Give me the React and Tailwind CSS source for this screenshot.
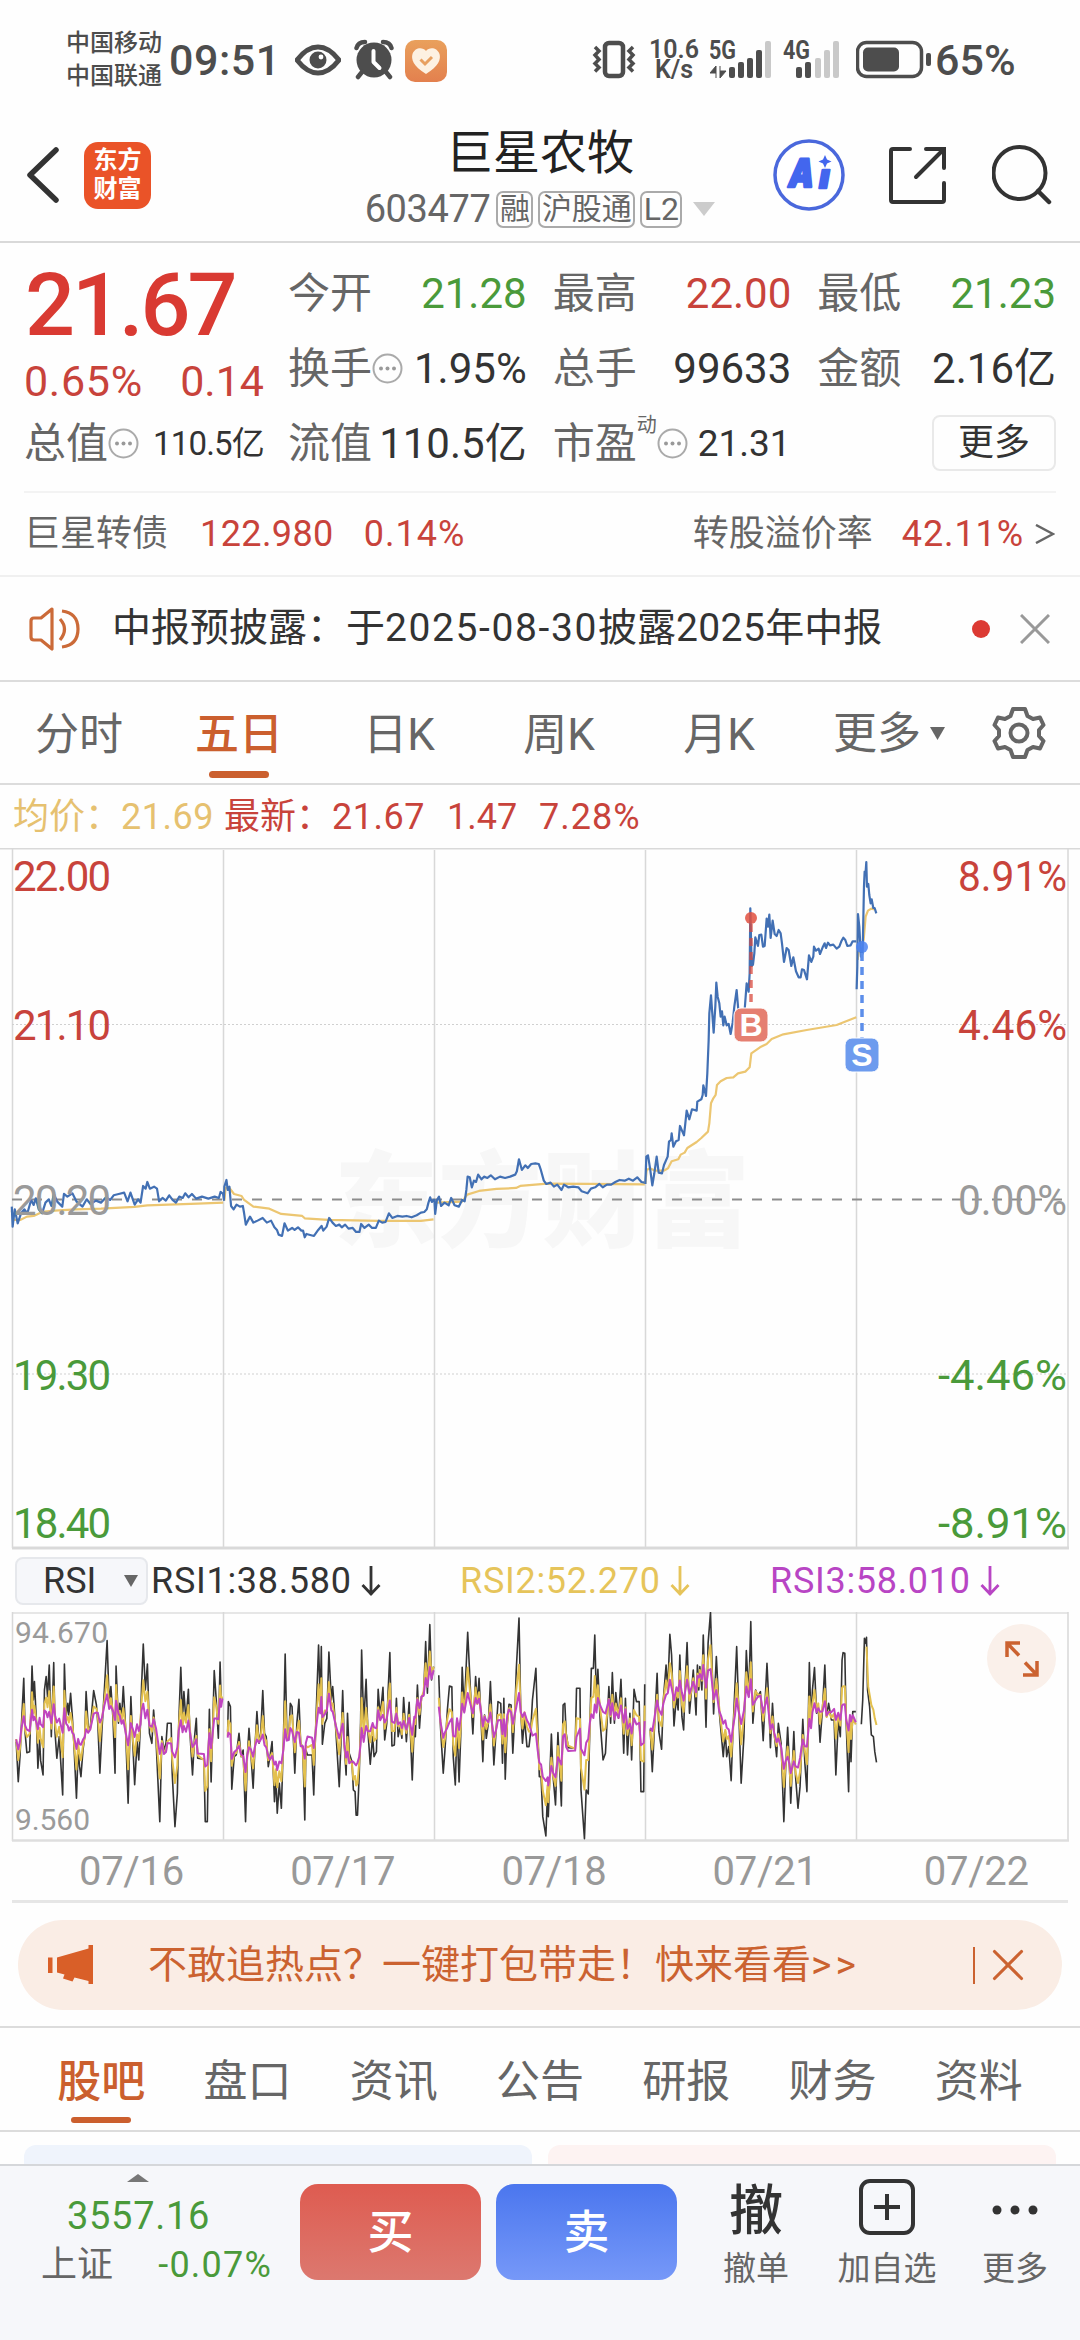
import { LuX } from 'react-icons/lu'

const stats = [
  [
    { label: '今开', value: '21.28', color: 'text-[#4a9a3a]' },
    { label: '最高', value: '22.00', color: 'text-[#c8433b]' },
    { label: '最低', value: '21.23', color: 'text-[#4a9a3a]' },
  ],
  [
    { label: '换手', value: '1.95%', color: 'text-[#333]', info: true },
    { label: '总手', value: '99633', color: 'text-[#333]' },
    { label: '金额', value: '2.16亿', color: 'text-[#333]' },
  ],
]

const periods = ['分时', '五日', '日K', '周K', '月K']
const dates = ['07/16', '07/17', '07/18', '07/21', '07/22']
const sections = ['股吧', '盘口', '资讯', '公告', '研报', '财务', '资料']

const axis = [
  { price: '22.00', pct: '8.91%', y: 28, width: 109, color: '#c8433b' },
  { price: '21.10', pct: '4.46%', y: 177, width: 109, color: '#c8433b' },
  { price: '20.20', pct: '0.00%', y: 352, width: 109, color: '#9a9a9a' },
  { price: '19.30', pct: '-4.46%', y: 527, width: 129, color: '#4a9a3a' },
  { price: '18.40', pct: '-8.91%', y: 675, width: 129, color: '#4a9a3a' },
]

// first three trading days
const priceA = [
  '28,1100 30,1160 35,1108 42,1150 50,1120 58,1108 65,1120 74,1080 80,1095 85,1075 92,1108 100,1120 108,1088 116,1078 122,1098 128,1062 136,1085 148,1100 152,1062 160,1070 172,1060 182,1085 196,1100 206,1078 215,1092 228,1082 240,1088 252,1072 262,1080 270,1066 282,1062 295,1058 303,1084 310,1058 320,1094 328,1078 334,1088 340,1038 346,1046 350,1026 356,1046 366,1040 373,1046 378,1084 386,1074 394,1082 402,1066 410,1080 418,1088 426,1070 434,1074 440,1060 448,1072 456,1062 466,1076 480,1070 495,1076 510,1070 520,1074 524,1056 530,1062 532,1080 533,1040 538,1020 541,1050 545,1040 549,1098 555,1108 562,1094 570,1100 577,1098 580,1120 584,1154 594,1130 602,1148 612,1142 624,1134 634,1148 644,1142 652,1162 658,1170 662,1184 670,1188 676,1150 684,1172 694,1164 700,1170 708,1162 716,1172 720,1172 724,1192 728,1182 746,1188 756,1170 764,1158 768,1172 776,1160 782,1134 790,1148 798,1158 806,1154 812,1162 820,1154 828,1166 838,1164 846,1176 854,1176 858,1152 866,1164 876,1154 884,1164 893,1164 900,1142 908,1148 916,1146 924,1120 932,1134 944,1128 956,1130 966,1128 978,1132 990,1126 1000,1118 1008,1116 1014,1108 1018,1088 1022,1072 1026,1086 1030,1080 1032,1080 1034,1122 1038,1080 1043,1070 1048,1098 1056,1088 1066,1096 1072,1074 1080,1096 1090,1100 1098,1080 1104,1084 1108,1050 1111,1010 1116,1012 1121,1042 1126,1022 1131,1026 1136,1004 1144,1018 1150,1010 1158,1014 1166,1006 1176,1018 1188,1010 1200,1014 1212,1010 1224,1004 1228,994 1233,958 1240,990 1248,976 1254,984 1262,972 1272,970 1280,972 1285,990 1292,1022 1298,1032 1308,1028 1316,1040 1324,1034 1334,1050 1340,1034 1350,1042 1362,1040 1374,1042 1382,1054 1396,1060 1404,1046 1414,1042 1424,1032 1432,1042 1442,1034 1452,1034 1462,1026 1472,1020 1484,1022 1494,1016 1504,1022 1514,1012 1524,1026 1532,1028',
]
const avgA = [
  '28,1112 32,1140 48,1140 64,1130 80,1128 100,1116 130,1112 180,1108 240,1106 320,1101 350,1096 400,1094 470,1091 530,1088',
  '533,1082 536,1044 545,1044 556,1062 574,1068 580,1080 602,1100 640,1106 668,1122 718,1128 724,1135 780,1140 900,1143 1000,1143 1030,1138',
  '1036,1088 1098,1085 1110,1064 1138,1053 1180,1047 1226,1044 1236,1038 1300,1031 1400,1032 1532,1033',
]
// last two trading days
const priceB = [
  '136,1032 139,950 144,946 150,984 157,1036 163,1000 170,950 176,998 186,1000 192,975 203,950 207,905 213,900 215,880 220,920 228,904 236,900 240,858 246,872 252,886 256,850 260,812 268,838 276,808 290,812 292,785 304,778 308,765 310,736 318,768 322,700 326,600 328,520 333,466 341,578 346,500 349,428 353,470 358,490 362,530 366,514 370,556 374,530 380,556 386,552 392,582 398,548 403,500 410,450 415,510 422,570 428,520 434,510 440,430 446,455 449,400 451,205 455,378 459,374 463,340 466,292 474,318 478,285 484,284 489,320 494,318 500,236 504,260 508,224 512,294 518,242 524,282 530,288 536,270 542,280 546,310 552,366 560,324 566,330 574,378 580,352 588,394 596,412 602,412 606,388 612,390 621,418 627,346 634,366 640,350 642,320 648,332 656,326 660,342 668,322 674,310 678,324 684,308 690,316 700,314 710,326 718,320 724,304 730,293 736,300 742,318 752,316 758,304 769,304',
  '770,448 772,380 774,222 778,260 783,350 788,340 792,140 794,95 797,95 799,66 801,140 805,132 808,165 812,190 815,178 820,204 824,204 829,220',
]
const avgB = [
  '136,1032 140,990 150,985 165,992 192,992 204,985 215,964 235,958 242,944 254,938 262,924 290,906 304,894 324,875 328,850 333,790 340,775 347,765 351,735 362,724 380,714 400,712 414,700 436,695 449,682 454,640 480,622 500,612 515,597 550,583 620,570 710,555 769,532',
  '773,360 778,320 785,310 791,300 797,230 804,212 814,206 824,208',
]

const rsi = [
  '47,455 53,575 58,500 62,410 69,265 73,430 78,488 86,485 90,350 93,228 97,330 100,275 106,400 110,535 115,450 118,512 125,555 129,300 134,260 138,320 143,225 149,440 156,218 160,430 165,505 172,440 182,615 187,222 192,380 197,340 200,375 205,310 210,380 214,450 222,625 227,480 231,530 235,560 241,480 246,440 250,305 256,410 262,415 272,302 280,345 284,400 290,550 296,420 303,300 311,152 317,340 322,290 328,385 334,550 337,228 344,400 348,340 353,385 358,290 364,400 372,640 380,320 386,470 391,584 398,455 403,510 408,400 411,290 416,162 422,300 428,222 434,430 441,460 446,360 453,450 464,695 470,440 476,480 482,460 486,400 497,400 500,550 508,710 515,610 519,400 525,232 530,385 534,305 540,395 547,298 551,420 559,555 565,440 570,385 574,505 592,508 596,695 602,695 605,500 608,358 613,576 618,400 622,242 628,330 634,445 639,216 642,325 646,325',
  '661,425 663,335 669,350 673,598 680,500 686,495 694,430 700,500 706,480 713,695 718,500 723,415 729,500 735,595 740,480 746,365 752,460 757,430 763,302 768,430 773,440 779,530 784,500 790,455 797,635 801,560 805,670 811,580 817,655 823,450 828,192 833,430 838,450 843,340 848,350 856,550 862,400 868,328 873,460 879,470 885,690 888,480 893,495 906,495 911,615 917,400 925,165 930,340 933,170 936,463 943,400 949,385 955,186 962,330 966,290 975,420 985,590 990,460 995,302 1000,470 1005,555 1009,370 1014,490 1022,515 1026,600 1031,605 1034,676 1038,676 1043,555 1047,400 1050,180 1056,400 1063,268 1068,420 1075,523 1082,440 1086,500 1093,485 1098,298 1104,380 1112,292 1117,450 1123,400 1128,280 1132,188 1138,468 1145,465 1151,325 1156,440 1162,410 1167,445 1172,323 1180,455 1188,337 1197,570 1203,400 1206,440 1212,285 1218,415 1224,320 1230,315 1236,155 1241,310 1248,104 1253,270 1259,230',
  '1274,256 1279,410 1287,550 1292,480 1299,360 1305,288 1312,290 1316,500 1322,585 1327,405 1333,576 1338,430 1342,232 1348,360 1358,127 1366,300 1373,432 1381,260 1386,340 1391,265 1396,370 1402,515 1407,375 1412,445 1418,400 1424,275 1434,525 1440,430 1446,335 1454,340 1459,520 1463,325 1467,568 1473,400 1478,343 1484,345 1489,490 1495,370 1499,240 1507,84 1512,360 1517,460 1523,385 1530,470 1536,470 1541,425 1546,330 1556,235 1561,400 1566,560 1571,560 1576,680 1585,738 1590,600 1592,680 1601,432 1606,560 1613,645 1620,428 1630,648 1635,345 1640,340 1644,430 1650,473 1670,475 1674,295 1684,295 1687,600 1697,746 1702,600 1708,612 1713,400 1717,235 1723,235 1727,135 1732,340 1736,238 1743,400 1751,510 1758,490 1768,290 1773,400 1778,248 1784,400 1788,308 1796,385 1803,268 1811,490 1816,325 1822,495 1829,370 1834,510 1841,298 1848,335 1856,335 1861,605 1869,605 1872,283',
  '1888,418 1894,545 1899,440 1908,250 1913,425 1921,478 1926,330 1934,225 1939,300 1945,133 1950,195 1957,408 1964,320 1969,360 1974,195 1980,380 1985,420 1990,270 1995,158 2002,370 2008,300 2013,240 2021,375 2025,225 2029,300 2032,230 2038,300 2042,135 2050,412 2056,160 2063,67 2068,240 2072,372 2080,200 2088,360 2094,430 2100,500 2106,425 2110,500 2116,470 2123,572 2128,430 2134,290 2139,170 2144,330 2152,580 2160,440 2167,182 2174,320 2180,95 2186,400 2194,300 2200,320 2208,305 2216,452 2227,220 2232,330 2237,473 2243,340 2248,430 2255,500 2260,400 2268,460 2276,695 2281,540 2287,412 2292,520 2296,640 2305,425 2310,560 2317,655 2323,590 2331,388 2337,520 2343,605 2350,218 2355,400 2359,300 2365,233 2371,370 2376,350 2381,457 2388,360 2395,225 2400,380 2406,340 2414,390 2422,390 2427,555 2434,390 2440,440 2445,210 2448,188 2453,190 2457,400 2464,605 2468,400 2471,515 2476,365 2485,365',
  '2501,403 2505,330 2510,145 2514,160 2516,142 2519,300 2525,350 2530,435 2536,440 2540,485 2545,517',
]

// pull each value towards the average of its neighbours
function damp(points, span, keep) {
  const list = points.split(' ').map((p) => p.split(',').map(Number))
  return list
    .map(([x, y], i) => {
      const near = list.slice(Math.max(0, i - span), i + span + 1)
      const mean = near.reduce((sum, p) => sum + p[1], 0) / near.length
      return `${x},${(mean + (y - mean) * keep).toFixed(1)}`
    })
    .join(' ')
}

const rsi2 = [
  ...rsi.slice(0, 4).map((day) => damp(day, 5, 0.5)),
  '2516,170 2521,290 2526,320 2530,345 2536,360 2540,385 2545,405',
]
const rsi3 = rsi.slice(0, 4).map((day) => damp(day, 6, 0.22))

function Lines({ data, color, width = 2.2 }) {
  return data.map((points, index) => (
    <polyline
      key={index}
      points={points}
      fill="none"
      stroke={color}
      strokeWidth={width}
      strokeLinejoin="round"
      vectorEffect="non-scaling-stroke"
    />
  ))
}

function Info() {
  return (
    <svg className="w-[31px] h-[31px] shrink-0" viewBox="0 0 31 31">
      <circle cx="15.5" cy="15.5" r="14" fill="none" stroke="#aaa" strokeWidth="2" />
      <circle cx="9" cy="15.5" r="2" fill="#999" />
      <circle cx="15.5" cy="15.5" r="2" fill="#999" />
      <circle cx="22" cy="15.5" r="2" fill="#999" />
    </svg>
  )
}

function StatusBar() {
  return (
    <div className="h-[122px] flex items-start pt-[26px] text-[#4d4d4d] font-medium">
      <div className="ml-[66px] w-[103px] pt-[1px] text-[24px] leading-[33px] whitespace-nowrap">
        <p>中国移动</p>
        <p>中国联通</p>
      </div>
      <p className="w-[126px] text-[43px] leading-[68px] tracking-[0.5px]">09:51</p>
      <svg className="w-[46px] h-[68px]" viewBox="0 0 46 68">
        <path d="M2 34 Q12 21 23 21 T44 34 Q34 47 23 47 T2 34 Z" fill="none" stroke="#4d4d4d" strokeWidth="5" strokeLinejoin="round" />
        <circle cx="23" cy="34" r="8.5" fill="#4d4d4d" />
        <circle cx="26" cy="31" r="2.4" fill="#fff" />
      </svg>
      <svg className="w-[40px] h-[68px] ml-[13px]" viewBox="0 0 40 68">
        <circle cx="20" cy="34" r="17.5" fill="#4d4d4d" />
        <path d="M2.500 22 Q4 16 11 16 M37.500 22 Q36 16 29 16 M8 46 l-4 5 M32 46 l4 5" fill="none" stroke="#4d4d4d" strokeWidth="4.500" strokeLinecap="round" />
        <path d="M19.500 25 v11 l6 6" fill="none" stroke="#fff" strokeWidth="4" strokeLinecap="round" strokeLinejoin="round" />
      </svg>
      <div className="w-[42px] h-[42px] mt-[14px] ml-[11px] rounded-[10px] bg-gradient-to-b from-[#e9a05c] to-[#e3804e] flex items-center justify-center">
        <svg className="w-[30px] h-[28px]" viewBox="0 0 30 28">
          <path d="M15 27 C2 19 0 12 1.500 7 C4 0 12 0 15 4 C18 0 26 0 28.500 7 C30 12 28 19 15 27 Z" fill="#fdf1e2" />
          <path d="M9.500 12.500 l4.500 4.500 7-7" fill="none" stroke="#e8a060" strokeWidth="3" />
        </svg>
      </div>
      <svg className="w-[44px] h-[68px] ml-[145px]" viewBox="0 0 44 68">
        <rect x="13" y="17" width="18" height="33" rx="4" fill="none" stroke="#4d4d4d" strokeWidth="4.500" />
        <path d="M3 21 l4 4 -4 4 4 4.500 -4 4 4 4 -4 4 M41 21 l-4 4 4 4 -4 4.500 4 4 -4 4 4 4" fill="none" stroke="#4d4d4d" strokeWidth="3.500" />
      </svg>
      <div className="w-[74px] pt-[14px] pl-[2px] text-[25px] leading-[20px] font-semibold text-center">
        <p>10.6</p>
        <p>K/s</p>
      </div>
      <svg className="w-[146px] h-[68px]" viewBox="710 26 146 68">
        <text x="709" y="59" fontSize="25" fontWeight="700" fill="#4d4d4d" textLength="27" lengthAdjust="spacingAndGlyphs">5G</text>
        <text x="783" y="59" fontSize="25" fontWeight="700" fill="#4d4d4d" textLength="27" lengthAdjust="spacingAndGlyphs">4G</text>
        <path d="M716 78 v-12 l-6 7 h6 M720 66 v12 l6 -7 h-6" fill="#4d4d4d" stroke="#4d4d4d" />
        <g fill="#4d4d4d">
          <rect x="729" y="67" width="6" height="11" rx="2" />
          <rect x="738" y="62" width="6" height="16" rx="2" />
          <rect x="747" y="58" width="6" height="20" rx="2" />
          <rect x="756" y="50" width="6" height="28" rx="2" />
          <rect x="796" y="67" width="6" height="11" rx="2" />
          <rect x="805" y="62" width="6" height="16" rx="2" />
        </g>
        <g fill="#c9c9c9">
          <rect x="765" y="41" width="6" height="37" rx="2" />
          <rect x="815" y="58" width="6" height="20" rx="2" />
          <rect x="824" y="50" width="6" height="28" rx="2" />
          <rect x="833" y="41" width="6" height="37" rx="2" />
        </g>
      </svg>
      <svg className="w-[79px] h-[68px]" viewBox="855 26 79 68">
        <rect x="856.500" y="42.500" width="64" height="34" rx="9" fill="none" stroke="#4d4d4d" strokeWidth="3.500" />
        <rect x="862" y="47.500" width="36" height="24" rx="5" fill="#4d4d4d" />
        <rect x="925" y="53" width="5" height="13" rx="2" fill="#4d4d4d" />
      </svg>
      <p className="text-[43px] leading-[68px]">65%</p>
    </div>
  )
}

function Header() {
  return (
    <div className="h-[121px] flex items-start border-b-2 border-[#d9d9d9]">
      <svg className="w-[34px] h-[58px] mt-[24px] ml-[26px]" viewBox="0 0 34 58">
        <path d="M30 4 L4 29 L30 54" fill="none" stroke="#333" strokeWidth="5.500" strokeLinejoin="round" strokeLinecap="round" />
      </svg>
      <div className="w-[67px] h-[67px] mt-[20px] ml-[24px] rounded-[14px] bg-[#ea5328] text-white font-bold text-[24px] leading-[29px] pt-[4px] text-center">
        <p>东方</p>
        <p>财富</p>
      </div>
      <div className="w-[564px] ml-[107px] pt-[1px] flex flex-col items-center">
        <h1 className="text-[47px] leading-[60px] text-[#222]">巨星农牧</h1>
        <div className="flex items-center h-[52px] text-[#666]">
          <p className="text-[38px] mr-[6px] tracking-[-0.4px]">603477</p>
          <span className="w-[37px] h-[37px] border-2 border-[#aaa] rounded-[7px] text-[30px] leading-[32px] flex justify-center">融</span>
          <span className="w-[97px] h-[37px] ml-[5px] border-2 border-[#aaa] rounded-[7px] text-[30px] leading-[32px] flex justify-center">沪股通</span>
          <span className="w-[42px] h-[37px] ml-[5px] border-2 border-[#aaa] rounded-[7px] text-[32px] leading-[33px] flex justify-center">L2</span>
          <svg className="w-[22px] h-[14px] ml-[11px]" viewBox="0 0 22 14">
            <path d="M0 0 H22 L11 14 Z" fill="#ccc" />
          </svg>
        </div>
      </div>
      <svg className="w-[72px] h-[72px] mt-[17px] -ml-[49px] shrink-0" viewBox="772 139 72 72">
        <circle cx="808" cy="175" r="34" fill="#fff" stroke="#4a68dc" strokeWidth="3.500" />
        <g transform="translate(32 0) skewX(-10)" fill="#4366ee" stroke="#4366ee" strokeWidth="2.500" strokeLinejoin="round" fontFamily="Inter, sans-serif" fontWeight="900">
          <text x="787" y="187" fontSize="39" textLength="25" lengthAdjust="spacingAndGlyphs">A</text>
          <text x="818" y="188" fontSize="33" textLength="10" lengthAdjust="spacingAndGlyphs">ı</text>
        </g>
        <path d="M824 155 l2 4.500 4.500 2 -4.500 2 -2 4.500 -2 -4.500 -4.500 -2 4.500 -2 Z" fill="#4366ee" />
      </svg>
      <svg className="w-[60px] h-[60px] mt-[23px] ml-[43px] shrink-0" viewBox="887 145 60 60">
        <path d="M909 149 H892 Q890 149 890 151 V200 Q890 202 892 202 H941 Q943 202 943 200 V183 M925 149 H943 V168 M942 150 L915 177" fill="none" stroke="#333" strokeWidth="4" strokeLinecap="round" />
      </svg>
      <svg className="w-[60px] h-[60px] mt-[23px] ml-[44px] shrink-0" viewBox="991 145 60 60">
        <circle cx="1018.500" cy="173" r="26" fill="none" stroke="#333" strokeWidth="4" />
        <path d="M1037 191 L1048 202" stroke="#333" strokeWidth="4.500" strokeLinecap="round" />
      </svg>
    </div>
  )
}

function Quote() {
  return (
    <div className="px-[24px]">
      <div className="h-[250px] pt-[13px] flex border-b-2 border-[#f3f3f3]">
        <div className="w-[240px] text-[#d93a32] whitespace-nowrap">
          <p className="h-[98px] pl-[1px] leading-[98px] text-[88px] font-medium tracking-[-3px]">21.67</p>
          <div className="h-[52px] leading-[54px] flex justify-between text-[43px] text-[#c8433b]">
            <span className="tracking-[0.7px]">0.65%</span>
            <span>0.14</span>
          </div>
          <div className="h-[75px] flex items-center text-[#666] text-[42px]">
            <span>总值</span>
            <Info />
            <span className="ml-auto text-[#333] text-[33px] tracking-[-0.8px]">110.5亿</span>
          </div>
        </div>
        <div className="flex-1 ml-[24px]">
          {stats.map((row, index) => (
            <div className="grid grid-cols-3 gap-[26px]" key={index}>
              {row.map((item) => (
                <div className="h-[75px] flex items-center text-[42px] whitespace-nowrap" key={item.label}>
                  <span className="text-[#666]">{item.label}</span>
                  {item.info && <Info />}
                  <span className={`ml-auto ${item.color}`}>{item.value}</span>
                </div>
              ))}
            </div>
          ))}
          <div className="grid grid-cols-3 gap-[26px]">
            <div className="h-[75px] flex items-center justify-between text-[42px] whitespace-nowrap">
              <span className="text-[#666]">流值</span>
              <span className="text-[#333]">110.5亿</span>
            </div>
            <div className="h-[75px] flex items-center text-[42px]">
              <span className="text-[#666]">市盈</span>
              <sup className="text-[20px] text-[#666] -top-[19px]">动</sup>
              <Info />
              <span className="ml-[10px] text-[#333] text-[37px]">21.31</span>
            </div>
            <div className="h-[75px] flex items-center justify-end">
              <button className="w-[124px] h-[56px] -mt-[2px] border-2 border-[#e9e9e9] rounded-[8px] text-[36px] leading-[48px] text-[#333]">更多</button>
            </div>
          </div>
        </div>
      </div>
      <div className="h-[82px] flex items-center text-[36px] text-[#666] whitespace-nowrap">
        <span>巨星转债</span>
        <span className="ml-[32px] text-[#c8433b] tracking-[0.4px]">122.980</span>
        <span className="ml-[30px] text-[#c8433b] tracking-[1px]">0.14%</span>
        <span className="ml-auto">转股溢价率</span>
        <span className="ml-[29px] mr-[11px] text-[#c8433b] tracking-[0.9px]">42.11%</span>
        <svg className="w-[20px] h-[20px] mr-[1px]" viewBox="0 0 20 20">
          <path d="M1 1 L18 10 L1 19" fill="none" stroke="#666" strokeWidth="2.500" />
        </svg>
      </div>
    </div>
  )
}

function Notice() {
  return (
    <div className="h-[107px] flex items-center border-y-2 border-t-[#f0f0f0] border-b-[#dcdcdc]">
      <svg className="w-[54px] h-[46px] ml-[28px]" viewBox="28 605 54 46">
        <path d="M52 608 L41 617 H34 Q31 617 31 620 V636 Q31 639 34 639 H41 L52 648 Z M60 618 Q69 628 60 639 M62 610 Q78 612 78 628 T62 646" fill="none" stroke="#cb6a38" strokeWidth="3.200" strokeLinejoin="round" />
      </svg>
      <p className="ml-[30px] text-[39px] text-[#333] whitespace-nowrap">
        中报预披露：于<span className="tracking-[1.6px]">2025-08-30</span>披露<span className="tracking-[0.4px]">2025</span>年中报
      </p>
      <span className="ml-auto w-[18px] h-[18px] rounded-full bg-[#dc3a33]" />
      <svg className="w-[30px] h-[30px] ml-[30px] mr-[30px]" viewBox="0 0 30 30">
        <path d="M1 1 L29 29 M29 1 L1 29" stroke="#999" strokeWidth="3" />
      </svg>
    </div>
  )
}

function Periods() {
  return (
    <div className="h-[103px] flex border-b-2 border-[#dcdcdc] text-[44px] text-[#666]">
      {periods.map((item) => (
        <div className="w-[160px] flex flex-col items-center" key={item}>
          <span className={`h-[89px] pt-[16px] pr-[2px] leading-[74px] ${item === '五日' ? 'text-[#cb5f2e] font-medium' : ''}`}>{item}</span>
          {item === '五日' && <span className="w-[60px] h-[7px] -ml-[2px] rounded-full bg-[#cb5f2e]" />}
        </div>
      ))}
      <div className="w-[192px] h-[103px] pl-[33px] flex items-center gap-[9px]">
        <span>更多</span>
        <svg className="w-[15px] h-[13px]" viewBox="0 0 15 13">
          <path d="M0 0 H15 L7.500 13 Z" fill="#666" />
        </svg>
      </div>
      <svg className="w-[54px] h-[54px] mt-[24px]" viewBox="-27 -27 54 54">
        <path d="M-6 -24 H6 L8.500 -17 L14 -14 L21 -15.500 L24.500 -8 L20 -3 V3 L24.500 8 L21 15.500 L14 14 L8.500 17 L6 24 H-6 L-8.500 17 L-14 14 L-21 15.500 L-24.500 8 L-20 3 V-3 L-24.500 -8 L-21 -15.500 L-14 -14 L-8.500 -17 Z" fill="none" stroke="#666" strokeWidth="4" strokeLinejoin="round" />
        <circle r="8.500" fill="none" stroke="#666" strokeWidth="4" />
      </svg>
    </div>
  )
}

function PriceChart() {
  return (
    <svg className="block w-[1080px] h-[702px]" viewBox="0 0 1080 702">
      <text x="334" y="391" fontSize="104" fontWeight="900" fill="#f7f7f7">东方财富</text>
      <path d="M0 0.500 H1080" stroke="#d9d9d9" strokeWidth="2" />
      <path d="M12.500 0 V700 M223.500 2 V700 M434.500 2 V700 M645.500 2 V700 M856.500 2 V700 M1068 0 V700" stroke="#d8d8d8" strokeWidth="1.500" />
      <path d="M12 700 H1069" stroke="#d9d9d9" strokeWidth="3" />
      <path d="M12 176.500 H1068 M12 526 H1068" stroke="#d0d0d0" strokeWidth="1" strokeDasharray="2 2" />
      <path d="M12 351.500 H1064" stroke="#8c8c8c" strokeWidth="1.800" strokeDasharray="10 10" />
      <g transform="translate(0 -8) scale(0.4209 0.3333)">
        <Lines data={avgA} color="#ecc671" />
        <Lines data={priceA} color="#4270b4" />
      </g>
      <g transform="translate(600 -8) scale(0.3333)">
        <Lines data={avgB} color="#ecc671" />
        <Lines data={priceB} color="#4270b4" />
      </g>
      {axis.map((item) => (
        <g key={item.price} fill={item.color} fontSize="42">
          <text x="13" y={item.y + 15} textLength="98">{item.price}</text>
          <text x={1067 - item.width} y={item.y + 15} textLength={item.width} lengthAdjust="spacingAndGlyphs">{item.pct}</text>
        </g>
      ))}

      {/* buy and sell marks */}
      <path d="M751 76 V160" stroke="#d84a3e" strokeOpacity="0.75" strokeWidth="3.500" strokeDasharray="8 6" />
      <circle cx="751" cy="70" r="6" fill="#e0503f" fillOpacity="0.85" />
      <rect x="734" y="160" width="34" height="34" rx="7" fill="#e57f71" stroke="#fff" />
      <text x="751" y="188" textAnchor="middle" fontSize="32" fontWeight="700" fontFamily="Liberation Sans" fill="#fff">B</text>
      <path d="M862 105 V190" stroke="#5c8eea" strokeWidth="3.500" strokeDasharray="8 6" />
      <circle cx="862" cy="99" r="6" fill="#4a83f2" fillOpacity="0.85" />
      <rect x="845" y="190" width="34" height="34" rx="7" fill="#6d9bee" stroke="#fff" />
      <text x="862" y="218" textAnchor="middle" fontSize="32" fontWeight="700" fontFamily="Liberation Sans" fill="#fff">S</text>
    </svg>
  )
}

function Arrow() {
  return (
    <svg className="w-[20px] h-[32px] ml-[9px]" viewBox="0 0 20 32">
      <path d="M10 1 V30 M1.500 20 L10 29 L18.500 20" fill="none" stroke="currentColor" strokeWidth="2.800" />
    </svg>
  )
}

function RsiChart() {
  return (
    <div>
      <div className="h-[62px] flex items-center text-[36px] leading-[40px] text-[#333]">
        <div className="ml-[15px] w-[133px] h-[48px] bg-[#f6f7fa] border-2 border-[#e6e8ec] rounded-[8px] flex items-center">
          <span className="ml-[26px]">RSI</span>
          <svg className="w-[14px] h-[12px] ml-auto mr-[8px]" viewBox="0 0 14 12">
            <path d="M0 0 H14 L7 12 Z" fill="#666" />
          </svg>
        </div>
        <div className="w-[309px] ml-[3px] flex items-center tracking-[0.7px]">RSI1:38.580<Arrow /></div>
        <div className="w-[310px] flex items-center tracking-[0.7px] text-[#e6c45a]">RSI2:52.270<Arrow /></div>
        <div className="flex items-center tracking-[0.7px] text-[#b845c4]">RSI3:58.010<Arrow /></div>
      </div>
      <div className="relative">
        <svg className="block w-[1080px] h-[230px]" viewBox="0 0 1080 230">
          <path d="M12 1 H1068" stroke="#dedede" strokeWidth="1.500" />
          <path d="M12.500 0 V229 M223.500 0 V229 M434.500 0 V229 M645.500 0 V229 M856.500 0 V229 M1068 0 V229" stroke="#d8d8d8" strokeWidth="1.500" />
          <path d="M12 228.500 H1069" stroke="#dedede" strokeWidth="2.500" />
          <g fill="#9a9a9a" fontSize="30">
            <text x="15" y="31" textLength="93">94.670</text>
            <text x="15" y="218" textLength="75">9.560</text>
          </g>
          <g transform="translate(0 -22) scale(0.3444 0.3333)">
            <Lines data={rsi} color="#333" width={1.6} />
            <Lines data={rsi2} color="#e3c04e" width={2} />
            <Lines data={rsi3} color="#c044c0" width={2} />
          </g>
        </svg>
        <button className="absolute right-[24px] top-[12px] w-[69px] h-[69px] rounded-full bg-[#faf0ea] flex items-center justify-center">
          <svg className="w-[34px] h-[36px]" viewBox="0 0 34 36">
            <path d="M15 2 H2 V16 M2 2 L14 14.500 M32 20 V34 H18 M32 34 L20 21.500" fill="none" stroke="#cb6230" strokeWidth="3.500" />
          </svg>
        </button>
      </div>
      <div className="mx-[12px] h-[61px] grid grid-cols-5 border-b-[3px] border-[#e6e6e6] text-[#999] text-[40px] leading-[60px]">
        {dates.map((date) => (
          <p className="pl-[67px] tracking-[-0.3px]" key={date}>{date}</p>
        ))}
      </div>
    </div>
  )
}

function Banner() {
  return (
    <div className="h-[125px] pt-[17px] px-[18px] border-b-2 border-[#dcdcdc]">
      <div className="h-[90px] rounded-full bg-[#faede5] flex items-center text-[#cb6230]">
        <svg className="w-[46px] h-[40px] ml-[30px]" viewBox="0 0 46 40">
          <path d="M0 12.500 H4.500 V28 H0 Z M9 12.500 L40.500 3.500 V0 H45 V39 H40.500 V36 L26.500 32.500 L24.500 36.500 L15 33.500 L16.500 29.500 L9 27.500 Z" fill="#d95f28" />
        </svg>
        <p className="ml-[54px] text-[39px] whitespace-nowrap">
          不敢追热点？一键打包带走！快来看看<span className="tracking-[4px]">&gt;&gt;</span>
        </p>
        <span className="ml-auto w-[2px] h-[37px] bg-[#cb6230]" />
        <LuX className="w-[54px] h-[54px] ml-[6px] mr-[27px]" strokeWidth={1.4} />
      </div>
    </div>
  )
}

function SectionTabs() {
  return (
    <div className="h-[104px] px-[28px] grid grid-cols-7 border-b-2 border-[#dcdcdc] text-[44px] text-[#666]">
      {sections.map((item, index) => (
        <div className="flex flex-col items-center" key={item}>
          <span className={`h-[89px] pt-[17px] leading-[74px] ${index === 0 ? 'text-[#cb5f2e] font-medium' : ''}`}>{item}</span>
          {index === 0 && <span className="w-[60px] h-[6px] rounded-full bg-[#cb5f2e]" />}
        </div>
      ))}
    </div>
  )
}

function BottomBar() {
  return (
    <div className="h-[176px] flex bg-[#f6f7fa] border-t-2 border-[#d5d7da] text-[#666]">
      <div className="w-[300px] flex flex-col">
        <svg className="w-[22px] h-[8px] mt-[8px] ml-[127px]" viewBox="0 0 22 8">
          <path d="M11 0 L22 8 H0 Z" fill="#777" />
        </svg>
        <p className="ml-[67px] mt-[10px] h-[48px] leading-[48px] text-[38px] tracking-[0.7px] text-[#4a9a3a]">3557.16</p>
        <div className="ml-[41px] w-[231px] h-[48px] leading-[50px] flex justify-between text-[36px]">
          <span>上证</span>
          <span className="text-[#4a9a3a] tracking-[1.2px]">-0.07%</span>
        </div>
      </div>
      <button className="w-[181px] h-[96px] mt-[18px] rounded-[18px] bg-gradient-to-b from-[#de5b50] to-[#dc786f] text-white text-[46px] font-medium">买</button>
      <button className="w-[181px] h-[96px] mt-[18px] ml-[15px] rounded-[18px] bg-gradient-to-b from-[#4b76ee] to-[#7698f8] text-white text-[46px] font-medium">卖</button>
      <div className="w-[110px] ml-[24px] flex flex-col items-center">
        <span className="h-[78px] pt-[16px] leading-[60px] text-[54px] font-medium text-[#333]">撤</span>
        <span className="text-[33px] leading-[49px]">撤单</span>
      </div>
      <div className="w-[130px] ml-[11px] flex flex-col items-center">
        <svg className="w-[56px] h-[56px] mt-[13px] mb-[9px]" viewBox="0 0 56 56">
          <rect x="2" y="2" width="52" height="52" rx="9" fill="none" stroke="#333" strokeWidth="4" />
          <path d="M28 15 V41 M15 28 H41" stroke="#333" strokeWidth="4" />
        </svg>
        <span className="text-[33px] leading-[49px]">加自选</span>
      </div>
      <div className="w-[110px] ml-[8px] flex flex-col items-center">
        <svg className="w-[46px] h-[10px] mt-[39px] mb-[29px]" viewBox="0 0 46 10">
          <circle cx="5" cy="5" r="4.500" fill="#333" />
          <circle cx="23" cy="5" r="4.500" fill="#333" />
          <circle cx="41" cy="5" r="4.500" fill="#333" />
        </svg>
        <span className="text-[33px] leading-[49px]">更多</span>
      </div>
    </div>
  )
}

export default function App() {
  return (
    <div className="w-[1080px] h-[2340px] overflow-hidden bg-[#fefefe] font-[Roboto,'Noto_Sans_CJK_SC',sans-serif]">
      <StatusBar />
      <Header />
      <Quote />
      <Notice />
      <Periods />
      <div className="h-[63px] pl-[13px] flex items-center text-[36px] text-[#c8433b] whitespace-pre">
        <span className="w-[108px] text-[#e6c170]">均价：</span>
        <span className="w-[103px] text-[#e6c170] tracking-[0.5px]">21.69</span>
        <span className="w-[108px]">最新：</span>
        <span className="w-[115px] tracking-[0.5px]">21.67</span>
        <span className="w-[92px]">1.47</span>
        <span className="tracking-[1px]">7.28%</span>
      </div>
      <PriceChart />
      <RsiChart />
      <Banner />
      <SectionTabs />
      <div className="h-[32px] pt-[13px] px-[24px] flex gap-[16px]">
        <div className="flex-1 rounded-t-[12px] bg-[#eff4fc]" />
        <div className="flex-1 rounded-t-[12px] bg-[#fdf3f2]" />
      </div>
      <BottomBar />
    </div>
  )
}
